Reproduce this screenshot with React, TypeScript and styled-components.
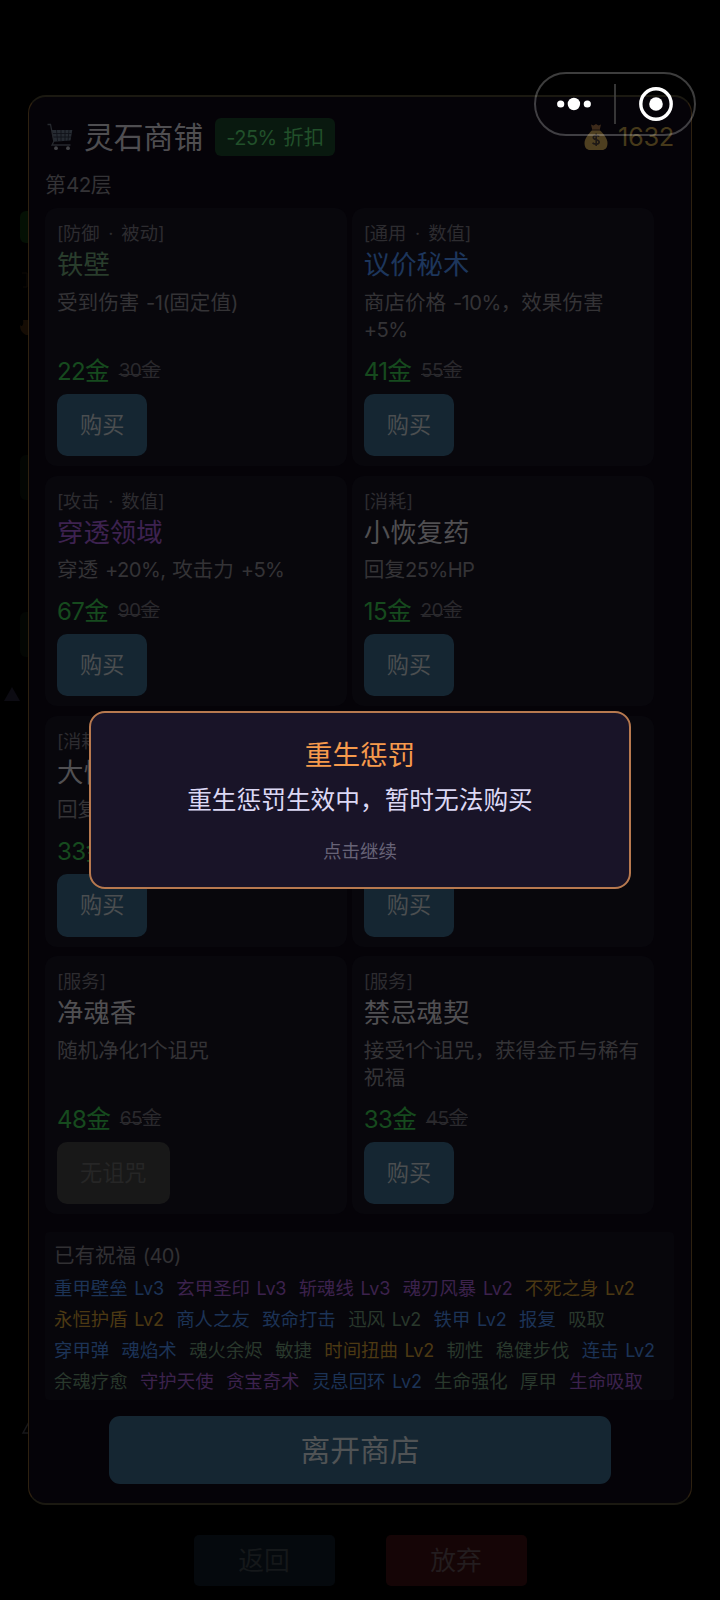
import React from "react";
import styled, { createGlobalStyle } from "styled-components";

const GlobalStyle = createGlobalStyle`
  * { box-sizing: border-box; }
  html, body { margin: 0; padding: 0; background: #000; }
  body {
    width: 720px;
    height: 1600px;
    overflow: hidden;
    font-family: "Noto Sans CJK SC", sans-serif;
    font-weight: 400;
  }
  button { font: inherit; border: 0; margin: 0; padding: 0; }
`;

const Latin = styled.span`
  font-family: Inter, "Noto Sans CJK SC", sans-serif;
  font-size: 0.98em;
  font-weight: 400;
  letter-spacing: -0.028em;
  line-height: 1;
  word-spacing: 0.08em;
  white-space: pre-wrap;
`;

// Sets Latin letters, digits and ASCII punctuation in a proportional face beside the Chinese text.
const Mixed = ({ text }: { text: string }) => (
  <>
    {text.split(/([\x20-\x7e·]+)/).map((part, i) =>
      i % 2 ? <Latin key={i}>{part}</Latin> : part
    )}
  </>
);

const Screen = styled.main`
  position: relative;
  width: 720px;
  height: 1600px;
  overflow: hidden;
  background: #000;
  padding: 95px 28px 0 28px;
`;

const Backdrop = styled.svg`
  position: absolute;
  left: 0;
  top: 0;
`;

const Panel = styled.section`
  position: relative;
  height: 1410px;
  padding: 21px 17px 0 16px;
  background: #050308;
  border: 2px solid #1b1911;
  border-left: 1px solid #2e2110;
  border-right: 1px solid #2e2110;
  border-radius: 18px;
`;

const Header = styled.header`
  display: flex;
  align-items: center;
  height: 38px;
  padding: 0 0 0 2px;
`;

const Title = styled.h1`
  margin: 0 0 0 11px;
  padding-bottom: 4px;
  font-size: 29.8px;
  line-height: 34px;
  font-weight: 400;
  color: #4f4e51;
`;

const Discount = styled.span`
  width: 120px;
  height: 38px;
  margin-left: 12px;
  border-radius: 6px;
  background: #09190f;
  color: #21502a;
  font-size: 20.4px;
  line-height: 36px;
  text-align: center;
`;

const Money = styled.span`
  display: flex;
  align-items: center;
  gap: 10px;
  margin-left: auto;
  font-size: 26px;
  line-height: 38px;
  color: #46391a;

  ${Latin} {
    letter-spacing: -0.015em;
  }
`;

const Floor = styled.div`
  margin-top: 12px;
  padding-left: 0;
  font-size: 21px;
  line-height: 30px;
  color: #343336;
`;

const Grid = styled.div`
  display: grid;
  grid-template-columns: 302px 302px;
  grid-template-rows: 258.2px 230.6px 230.6px 258.2px;
  column-gap: 4.8px;
  row-gap: 9.6px;
  margin-top: 10px;
`;

const Card = styled.article`
  display: flex;
  flex-direction: column;
  align-items: flex-start;
  padding: 12px 12px 0 12px;
  border-radius: 12px;
  background: #08070c;
`;

const Tag = styled.div`
  font-size: 18.3px;
  line-height: 24px;
  color: #2d2c30;
  white-space: pre;

  ${Latin} {
    word-spacing: 4px;
  }
`;

const Name = styled.h2<{ $color: string }>`
  margin: 1px 0 0;
  font-size: 26.4px;
  line-height: 36px;
  font-weight: 400;
  color: ${(p) => p.$color};
`;

const Desc = styled.div`
  margin: 6.5px -10px 0 0;
  font-size: 20.6px;
  line-height: 27.6px;
  color: #343336;
`;

const DescLine = styled.div`
  height: 27.6px;
  white-space: nowrap;
`;

const PriceRow = styled.div`
  display: flex;
  align-items: center;
  gap: 9px;
  margin-top: auto;
  height: 32px;
`;

const Price = styled.span`
  font-size: 24.6px;
  line-height: 32px;
  color: #164a1e;
`;

const OldPrice = styled.s`
  font-size: 19.4px;
  line-height: 32px;
  color: #2a292d;
  text-decoration-thickness: 1px;
`;

const BuyButton = styled.button<{ $off?: boolean }>`
  height: 62.6px;
  margin: 8.6px 0 10px;
  padding: 0 23px 4px;
  border-radius: 10px;
  font-size: 22.2px;
  background: ${(p) => (p.$off ? "#181818" : "#152632")};
  color: ${(p) => (p.$off ? "#262626" : "#4b4e50")};
`;

const Blessings = styled.section`
  margin-top: 17.6px;
  height: 168px;
  padding: 7px 9px 0;
  border-radius: 4px;
  background: #07060b;
`;

const BlessingTitle = styled.h3`
  margin: 0 0 1px;
  font-size: 20.5px;
  font-weight: 400;
  line-height: 30px;
  color: #313033;
`;

const BlessingLine = styled.div`
  display: flex;
  gap: 12.4px;
  height: 31px;
  font-size: 18.4px;
  line-height: 35px;
  white-space: nowrap;

  ${Latin} {
    letter-spacing: -0.01em;
    word-spacing: 0.1em;
  }
`;

const Blessing = styled.span<{ $color: string }>`
  color: ${(p) => p.$color};
`;

const LeaveButton = styled.button`
  display: block;
  width: 502px;
  height: 68px;
  margin: 16px 0 0 64px;
  padding-bottom: 4px;
  border-radius: 11px;
  background: #152632;
  color: #505355;
  font-size: 29.8px;
`;

const Footer = styled.footer`
  position: relative;
  display: flex;
  gap: 51px;
  margin-top: 30px;
  padding-left: 165.5px;
`;

const FooterButton = styled.button<{ $danger?: boolean }>`
  width: 141px;
  height: 51px;
  border-radius: 5px;
  padding-bottom: 4px;
  font-size: 25.8px;
  background: ${(p) => (p.$danger ? "#150506" : "#05090d")};
  color: ${(p) => (p.$danger ? "#231d1f" : "#15181a")};
`;

const Dialog = styled.div`
  position: absolute;
  left: 89px;
  top: 711px;
  width: 542px;
  height: 178px;
  padding-top: 20px;
  border: 2px solid #b7794f;
  border-radius: 16px;
  background: #191428;
  text-align: center;
`;

const DialogTitle = styled.div`
  font-size: 27.6px;
  line-height: 40px;
  color: #f69a4c;
`;

const DialogText = styled.div`
  margin-top: 5px;
  font-size: 24.7px;
  line-height: 40px;
  color: #dcd8f4;
`;

const DialogHint = styled.div`
  margin-top: 17px;
  font-size: 18.5px;
  line-height: 30px;
  color: #676377;
`;

const Capsule = styled.div`
  position: absolute;
  left: 534px;
  top: 72px;
  width: 162px;
  height: 64px;
  border: 2px solid rgba(255, 255, 255, 0.24);
  border-radius: 32px;
`;

const CapsuleIcons = styled.svg`
  display: block;
`;

const CartIcon = () => (
  <svg width="26" height="28" viewBox="0 0 26 28" fill="none">
    <path d="M4.8 7 H25.3 L23.5 17.5 L6.5 18.8 Z" fill="#262b32" />
    <path
      d="M5.5 10.5 H24.5 M6 14 H24 M9.5 7 L10.5 18 M14 7 V18 M18 7 V18 M22 7 L21 18"
      stroke="#11131a"
      strokeWidth="0.9"
    />
    <path d="M0.5 1.5 H3.5 L6.8 18.5 L5 22 H23.5" stroke="#26292e" strokeWidth="1.3" />
    <circle cx="9" cy="25.2" r="1.9" fill="#424347" />
    <circle cx="21" cy="25.2" r="1.9" fill="#424347" />
  </svg>
);

const MoneyBagIcon = () => (
  <svg width="24" height="28" viewBox="0 0 24 28">
    <path d="M7 1.5 L9.5 2.5 L12 1 L14.5 2.5 L17 1.5 L15.8 6.5 H8.2 Z" fill="#3d2a1a" />
    <path
      d="M8.4 7 H15.6 C19 10 23.5 15.5 23.5 20 C23.5 25 21 27 18 27 H6 C3 27 0.5 25 0.5 20 C0.5 15.5 5 10 8.4 7 Z"
      fill="#4e3f20"
    />
    <path d="M8 7 H16" stroke="#2c2014" strokeWidth="1.6" />
    <path
      d="M15.2 13.6 C14 12 9.3 11.9 9.3 14.5 C9.3 17.2 15.2 16.2 15.2 19 C15.2 21.6 10 21.8 8.6 19.8 M12.2 10.5 V23"
      stroke="#1d1816"
      strokeWidth="1.6"
      fill="none"
    />
  </svg>
);

const white = "#504f52";
const green = "#293d2c";
const blue = "#1d365c";
const purple = "#3d2250";

interface Item {
  tag: string;
  name: string;
  color: string;
  desc: string[];
  price: number;
  old: number;
  action?: string;
}

const items: Item[] = [
  { tag: "[防御 · 被动]", name: "铁壁", color: green, desc: ["受到伤害 -1(固定值)"], price: 22, old: 30 },
  { tag: "[通用 · 数值]", name: "议价秘术", color: blue, desc: ["商店价格 -10%，效果伤害", "+5%"], price: 41, old: 55 },
  { tag: "[攻击 · 数值]", name: "穿透领域", color: purple, desc: ["穿透 +20%, 攻击力 +5%"], price: 67, old: 90 },
  { tag: "[消耗]", name: "小恢复药", color: white, desc: ["回复25%HP"], price: 15, old: 20 },
  { tag: "[消耗]", name: "大恢复药", color: white, desc: ["回复60%HP"], price: 33, old: 45 },
  { tag: "", name: "", color: white, desc: [], price: 0, old: 0 },
  { tag: "[服务]", name: "净魂香", color: white, desc: ["随机净化1个诅咒"], price: 48, old: 65, action: "无诅咒" },
  { tag: "[服务]", name: "禁忌魂契", color: white, desc: ["接受1个诅咒，获得金币与稀有", "祝福"], price: 33, old: 45 },
];

const B = "#1c3356";
const P = "#3c224d";
const Y = "#4c3913";
const G = "#29382c";

const blessings: [string, string][][] = [
  [["重甲壁垒 Lv3", B], ["玄甲圣印 Lv3", P], ["斩魂线 Lv3", P], ["魂刃风暴 Lv2", P], ["不死之身 Lv2", Y]],
  [["永恒护盾 Lv2", Y], ["商人之友", B], ["致命打击", B], ["迅风 Lv2", G], ["铁甲 Lv2", B], ["报复", B], ["吸取", G]],
  [["穿甲弹", B], ["魂焰术", B], ["魂火余烬", G], ["敏捷", G], ["时间扭曲 Lv2", Y], ["韧性", G], ["稳健步伐", G], ["连击 Lv2", B]],
  [["余魂疗愈", G], ["守护天使", P], ["贪宝奇术", P], ["灵息回环 Lv2", B], ["生命强化", G], ["厚甲", G], ["生命吸取", P]],
];

export default function App() {
  return (
    <>
      <GlobalStyle />
      <Screen>
        <Backdrop width="720" height="1600">
          <rect x="20" y="211" width="30" height="32" rx="6" fill="#041004" />
          <path d="M22 273 H27 V287 H23" stroke="#0d0905" fill="none" />
          <path d="M20 325 C22 328 24 324 23 320 L32 320 V335 H26 C22 333 20 330 20 325 Z" fill="#150c04" />
          <rect x="20" y="455" width="20" height="45" rx="6" fill="#030603" />
          <rect x="20" y="612" width="20" height="45" rx="6" fill="#030603" />
          <path d="M12 687 L20 701 H4 Z" fill="#0c0b12" />
          <path d="M29 1422 L23 1433 H30" stroke="#17171a" strokeWidth="1.5" fill="none" />
        </Backdrop>
        <Panel>
          <Header>
            <CartIcon />
            <Title>灵石商铺</Title>
            <Discount>
              <Mixed text="-25% 折扣" />
            </Discount>
            <Money>
              <MoneyBagIcon />
              <Mixed text="1632" />
            </Money>
          </Header>
          <Floor>
            <Mixed text="第42层" />
          </Floor>
          <Grid>
            {items.map((it, i) => (
              <Card key={i}>
                {it.name && (
                  <>
                    <Tag>
                      <Mixed text={it.tag} />
                    </Tag>
                    <Name $color={it.color}>{it.name}</Name>
                    <Desc>
                      {it.desc.map((line) => (
                        <DescLine key={line}>
                          <Mixed text={line} />
                        </DescLine>
                      ))}
                    </Desc>
                  </>
                )}
                <PriceRow>
                  {it.price > 0 && (
                    <>
                      <Price>
                        <Mixed text={`${it.price}金`} />
                      </Price>
                      <OldPrice>
                        <Mixed text={`${it.old}金`} />
                      </OldPrice>
                    </>
                  )}
                </PriceRow>
                <BuyButton $off={!!it.action}>{it.action ?? "购买"}</BuyButton>
              </Card>
            ))}
          </Grid>
          <Blessings>
            <BlessingTitle>
              <Mixed text="已有祝福 (40)" />
            </BlessingTitle>
            {blessings.map((line, i) => (
              <BlessingLine key={i}>
                {line.map(([text, color]) => (
                  <Blessing key={text} $color={color}>
                    <Mixed text={text} />
                  </Blessing>
                ))}
              </BlessingLine>
            ))}
          </Blessings>
          <LeaveButton>离开商店</LeaveButton>
        </Panel>
        <Footer>
          <FooterButton>返回</FooterButton>
          <FooterButton $danger>放弃</FooterButton>
        </Footer>
        <Dialog>
          <DialogTitle>重生惩罚</DialogTitle>
          <DialogText>重生惩罚生效中，暂时无法购买</DialogText>
          <DialogHint>点击继续</DialogHint>
        </Dialog>
        <Capsule>
          <CapsuleIcons width="158" height="60" viewBox="536 74 158 60">
            <g fill="#fff">
              <circle cx="560.7" cy="104" r="3.6" />
              <circle cx="573.9" cy="104" r="6.2" />
              <circle cx="587.3" cy="104" r="3.6" />
              <circle cx="656" cy="104" r="6.8" />
            </g>
            <circle cx="656" cy="104" r="15.2" fill="none" stroke="#fff" strokeWidth="3.4" />
            <path d="M615 84 V124" stroke="#444" strokeWidth="1.6" />
          </CapsuleIcons>
        </Capsule>
      </Screen>
    </>
  );
}
